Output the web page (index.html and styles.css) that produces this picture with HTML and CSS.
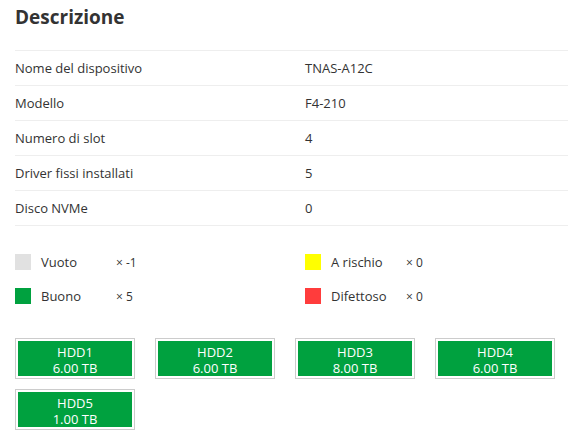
FILE: index.html
```html
<!DOCTYPE html>
<html>
<head>
<meta charset="utf-8">
<link rel="stylesheet" href="styles.css">
</head>
<body>
<div class="page">
  <h2 class="title">Descrizione</h2>
  <div class="table">
    <div class="row"><span class="key">Nome del dispositivo</span><span class="val">TNAS-A12C</span></div>
    <div class="row"><span class="key">Modello</span><span class="val">F4-210</span></div>
    <div class="row"><span class="key">Numero di slot</span><span class="val">4</span></div>
    <div class="row"><span class="key">Driver fissi installati</span><span class="val">5</span></div>
    <div class="row"><span class="key">Disco NVMe</span><span class="val">0</span></div>
  </div>
  <div class="legend">
    <div class="item"><span class="sw empty"></span><span class="lbl">Vuoto</span><span class="cnt">× -1</span></div>
    <div class="item"><span class="sw warn"></span><span class="lbl">A rischio</span><span class="cnt">× 0</span></div>
    <div class="item"><span class="sw good"></span><span class="lbl">Buono</span><span class="cnt">× 5</span></div>
    <div class="item"><span class="sw bad"></span><span class="lbl">Difettoso</span><span class="cnt">× 0</span></div>
  </div>
  <div class="disks">
    <div class="disk"><div class="inner"><div>HDD1</div><div>6.00 TB</div></div></div>
    <div class="disk"><div class="inner"><div>HDD2</div><div>6.00 TB</div></div></div>
    <div class="disk"><div class="inner"><div>HDD3</div><div>8.00 TB</div></div></div>
    <div class="disk"><div class="inner"><div>HDD4</div><div>6.00 TB</div></div></div>
    <div class="disk"><div class="inner"><div>HDD5</div><div>1.00 TB</div></div></div>
  </div>
</div>
</body>
</html>
```

FILE: styles.css
```css
html, body { margin: 0; padding: 0; background: #fff; }
body { font-family: "Open Sans", "Noto Sans", "Liberation Sans", sans-serif; color: #333; }
.page { padding: 0 0 0 15px; }
.title {
  margin: 0;
  padding-top: 4px;
  height: 46px;
  font-size: 19px;
  font-weight: 700;
  line-height: 26px;
  color: #333;
}
.table { border-top: 1px solid #eee; }
.row {
  display: flex;
  height: 34px;
  align-items: center;
  border-bottom: 1px solid #eee;
  font-size: 13px;
}
.key { width: 290px; }
.legend {
  display: grid;
  grid-template-columns: 290px 1fr;
  row-gap: 18px;
  padding-top: 28px;
  font-size: 13px;
}
.item { display: flex; align-items: center; height: 16px; }
.sw { width: 16px; height: 16px; margin-right: 10px; display: inline-block; }
.empty { background: #e1e1e1; }
.warn { background: #ffff00; }
.good { background: #00a13f; }
.bad { background: #ff3c3c; }
.lbl { width: 75px; }
.cnt { font-size: 12px; }
.disks {
  display: flex;
  flex-wrap: wrap;
  gap: 10px 20px;
  padding-top: 34px;
  width: 560px;
}
.disk {
  border: 1px solid #ccc;
  padding: 2px;
  width: 114px;
}
.inner {
  background: #00a13f;
  color: #fff;
  text-align: center;
  font-size: 13px;
  line-height: 16px;
  height: 35px;
  box-sizing: border-box;
  padding-top: 3px;
}
```
